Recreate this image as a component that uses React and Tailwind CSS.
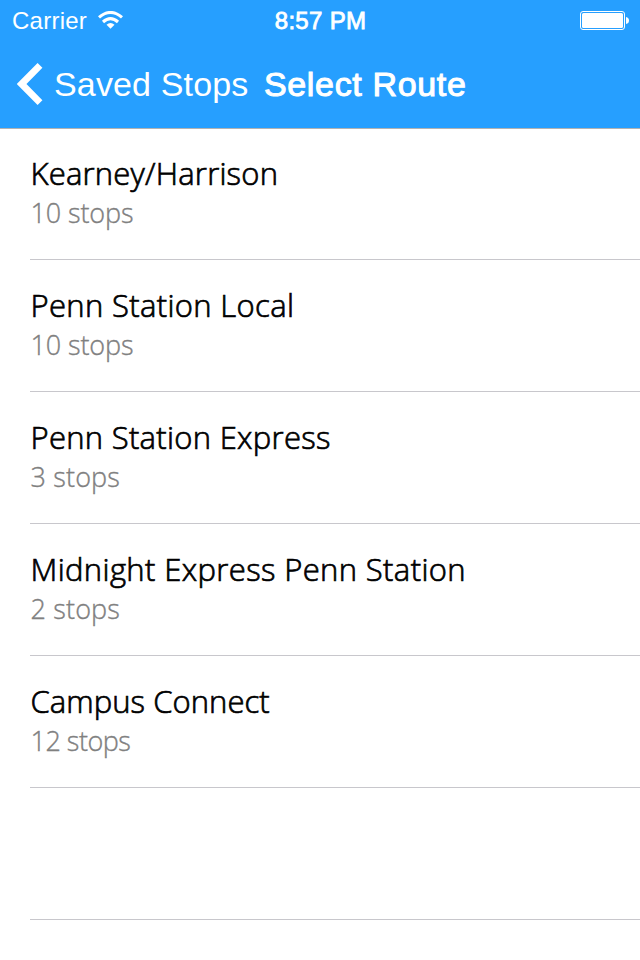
const routes = [
  { name: 'Kearney/Harrison', stops: '10 stops', nameTracking: 'tracking-[0.2px]', stopsTracking: 'tracking-[-0.12px]' },
  { name: 'Penn Station Local', stops: '10 stops', nameTracking: 'tracking-[0.34px]', stopsTracking: 'tracking-[-0.12px]' },
  { name: 'Penn Station Express', stops: '3 stops', nameTracking: 'tracking-[0.29px]', stopsTracking: 'tracking-[0.15px]' },
  { name: 'Midnight Express Penn Station', stops: '2 stops', nameTracking: 'tracking-[0.37px]', stopsTracking: 'tracking-[0.15px]' },
  { name: 'Campus Connect', stops: '12 stops', nameTracking: 'tracking-[0.06px]', stopsTracking: 'tracking-[-0.5px]' },
];

function WifiIcon() {
  return (
    <svg className="ml-[11px] h-[18px] w-[25px]" viewBox="0 0 25 18" fill="none" stroke="white" strokeWidth="3.1">
      <path d="M1 6.4Q12.5-3.4 24 6.4M5 11Q12.5 4.4 20 11" />
      <path d="M8.5 13.8Q12.5 10.4 16.5 13.8L12.5 17.8Z" fill="white" stroke="none" />
    </svg>
  );
}

function BatteryIcon() {
  return (
    <svg className="h-[19px] w-[49px]" viewBox="0 0 49 19">
      <rect x="0.5" y="0.5" width="44" height="18" rx="2.5" fill="none" stroke="white" />
      <rect x="2" y="2" width="41" height="15" rx="1.5" fill="white" />
      <path d="M46 6Q49 6.5 49 9.5T46 13Z" fill="white" />
    </svg>
  );
}

export default function App() {
  return (
    <div className="flex h-[960px] w-[640px] flex-col overflow-hidden bg-white font-['Open_Sans','Noto_Sans',sans-serif]">
      <header className="h-[128px] shrink-0 bg-[#269fff] font-['Liberation_Sans',sans-serif] text-white shadow-[0_1px_0_#b2b2b2]">
        <div className="grid h-10 grid-cols-[1fr_auto_1fr] items-center pl-3 pr-[11px] text-[24px] leading-10">
          <div className="flex items-center whitespace-nowrap">
            <span className="pt-0.5 leading-[38px] tracking-[0.25px]">Carrier</span>
            <WifiIcon />
          </div>
          <span className="pt-0.5 leading-[38px] tracking-[0.3px] [-webkit-text-stroke:0.8px_white]">8:57 PM</span>
          <div className="flex justify-end"><BatteryIcon /></div>
        </div>
        <div className="flex h-[88px] items-center whitespace-nowrap text-[34px] leading-[88px]">
          <svg className="ml-[17px] h-[42px] w-[26px]" viewBox="0 0 26 42" fill="none" stroke="white" strokeWidth="6.8">
            <path d="M23 2.4L4.6 21L23 39.6" />
          </svg>
          <span className="ml-[11px] tracking-[0.15px]">Saved Stops</span>
          <span className="ml-[15.5px] tracking-[0.66px] [-webkit-text-stroke:1px_white]">Select Route</span>
        </div>
      </header>
      <ul className="ml-[30px]">
        {routes.map((r) => (
          <li key={r.name} className="h-[132px] whitespace-nowrap border-b border-[#c8c7cc] pl-[0.5px] pt-[26px] font-light">
            <div className={`text-[31px] leading-[39px] text-black [-webkit-text-stroke:0.7px_black] ${r.nameTracking}`}>{r.name}</div>
            <div className={`text-[27px] leading-10 text-[#808080] [-webkit-text-stroke:0.35px_#808080] ${r.stopsTracking}`}>{r.stops}</div>
          </li>
        ))}
        <li className="h-[132px] border-b border-[#c8c7cc]" />
      </ul>
    </div>
  );
}
